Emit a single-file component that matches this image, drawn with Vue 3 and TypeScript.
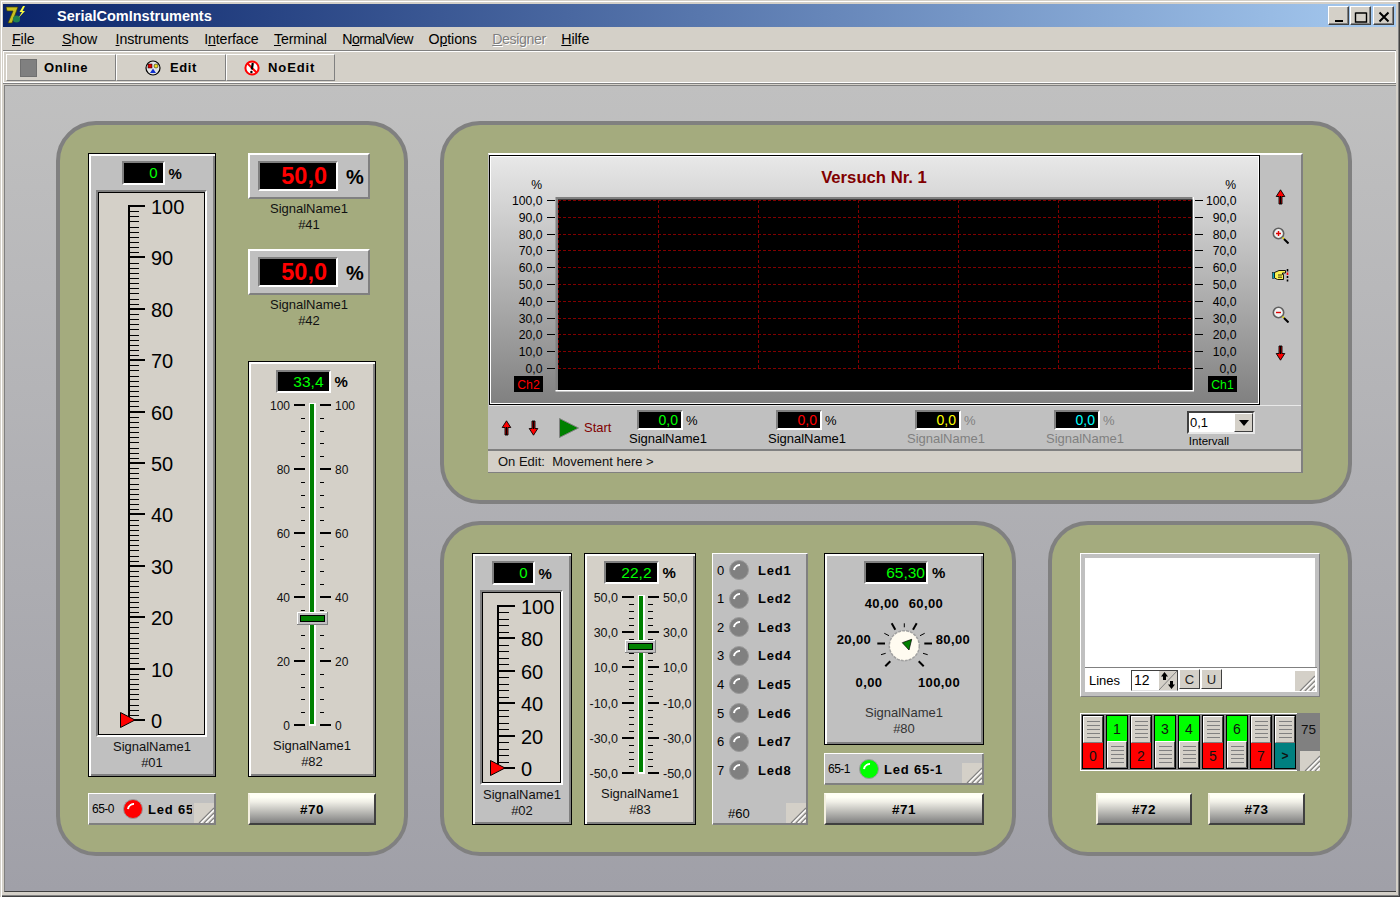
<script setup lang="ts">
interface Tick { y: number; major: boolean }

function makeTicks(top: number, bottom: number, majors: number, sub: number): Tick[] {
  const out: Tick[] = []
  const n = majors * sub
  for (let i = 0; i <= n; i++) {
    out.push({ y: Math.round(top + ((bottom - top) * i) / n), major: i % sub === 0 })
  }
  return out
}

function labelsOf(ticks: Tick[], names: string[]) {
  return ticks.filter(t => t.major).map((t, i) => ({ y: t.y, text: names[i] }))
}

const menu = [
  { pre: '', key: 'F', post: 'ile', cls: 'first' },
  { pre: '', key: 'S', post: 'how', cls: 'wide' },
  { pre: '', key: 'I', post: 'nstruments' },
  { pre: 'I', key: 'n', post: 'terface' },
  { pre: '', key: 'T', post: 'erminal' },
  { pre: 'N', key: 'o', post: 'rmalView', cls: 'tight' },
  { pre: 'O', key: 'p', post: 'tions' },
  { pre: '', key: 'D', post: 'esigner', cls: 'off' },
  { pre: '', key: 'H', post: 'ilfe' },
]

const scale01 = makeTicks(206, 720, 10, 10)
const scale01Labels = labelsOf(scale01, ['100', '90', '80', '70', '60', '50', '40', '30', '20', '10', '0'])
const scale02 = makeTicks(606, 768, 5, 5)
const scale02Labels = labelsOf(scale02, ['100', '80', '60', '40', '20', '0'])

const slider82 = makeTicks(405, 725, 5, 5)
const slider82Labels = labelsOf(slider82, ['100', '80', '60', '40', '20', '0'])
const slider83 = makeTicks(597, 773, 5, 5)
const slider83Labels = labelsOf(slider83, ['50,0', '30,0', '10,0', '-10,0', '-30,0', '-50,0'])

const axisY = [200, 217, 234, 250, 267, 284, 301, 318, 334, 351, 368]
const axisNames = ['100,0', '90,0', '80,0', '70,0', '60,0', '50,0', '40,0', '30,0', '20,0', '10,0', '0,0']
const gridX = [559, 659, 759, 859, 959, 1059, 1159]

const readouts = [
  { color: '#00ff00', off: false },
  { color: '#ff0000', off: false },
  { color: '#ffff00', off: true },
  { color: '#00ffff', off: true },
]

const ledRows = ['Led1', 'Led2', 'Led3', 'Led4', 'Led5', 'Led6', 'Led7', 'Led8']

const dialMajor = [
  [877.3, 644.5, 885, 644.5], [924.3, 644.5, 932, 644.5],
  [891.7, 624.3, 895.3, 630.7], [916.7, 624.3, 913, 630.7],
  [885.3, 667.3, 890.3, 662.3], [923.7, 667.3, 918.7, 662.3],
]
const dialMinor = [
  [904.3, 624.3, 904.3, 628.3], [884.3, 634.3, 889, 636.7], [924.7, 634.3, 920, 636.7],
  [881, 655.7, 885.7, 654.3], [927.7, 655.7, 923, 654.3],
]
const dialLabels = [
  { x: 882, y: 609, t: '40,00' }, { x: 926, y: 609, t: '60,00' },
  { x: 854, y: 645, t: '20,00' }, { x: 953, y: 645, t: '80,00' },
  { x: 869, y: 688, t: '0,00' }, { x: 939, y: 688, t: '100,00' },
]

// true = upper half lit (green), false = lower half lit (red)
const switches = [false, true, false, true, true, false, true, false]
</script>

<template>
  <div class="win">
    <!-- shared icons -->
    <svg class="defs" width="0" height="0" aria-hidden="true">
      <symbol id="grip" viewBox="0 0 20 20">
        <rect width="20" height="20" fill="#d4d0c8" />
        <path stroke="#808080" stroke-width="1.2" d="M5 20 20 5M10 20 20 10M15 20 20 15" />
        <path stroke="#fff" stroke-width="1.2" d="M7 20 20 7M12 20 20 12M17 20 20 17" />
      </symbol>
      <symbol id="arrow-up" viewBox="0 0 11 16">
        <path d="M5.5 .8 9.8 7.5H7V15H4V7.5H1.2Z" fill="#f00" stroke="#000" stroke-width=".9" />
        <path d="M5.5 7V15" stroke="#000" stroke-width="1.4" />
      </symbol>
      <symbol id="arrow-down" viewBox="0 0 11 16">
        <path d="M5.5 15.2 9.8 8.5H7V1H4V8.5H1.2Z" fill="#f00" stroke="#000" stroke-width=".9" />
        <path d="M5.5 9V1" stroke="#000" stroke-width="1.4" />
      </symbol>
    </svg>

    <header class="titlebar">
      <svg class="logo" viewBox="0 0 22 21">
        <path d="M1 2H13L7 18H3L8 6H2Z" fill="#c8c020" stroke="#404000" stroke-width=".7" />
        <circle cx="11.5" cy="14" r="3.6" fill="#208050" />
        <path d="M18 1 14.5 7H17L13.5 13 20 6H17.5L20 1Z" fill="#ffff40" />
      </svg>
      <span class="title">SerialComInstruments</span>
      <div class="caption-btns">
        <button class="cap"><svg viewBox="0 0 14 12"><path d="M3 10H11" stroke="#000" stroke-width="2" /></svg></button>
        <button class="cap"><svg viewBox="0 0 14 12"><path d="M1.5 2H12.5M1.5 1.5V11H12.5V1.5" fill="none" stroke="#000" stroke-width="1.4" /></svg></button>
        <button class="cap cap--close"><svg viewBox="0 0 14 12"><path d="M2.5 1.5 11.5 10.5M11.5 1.5 2.5 10.5" stroke="#000" stroke-width="2" /></svg></button>
      </div>
    </header>

    <nav class="menu">
      <span v-for="m in menu" :key="m.key + m.post" class="menu-item" :class="m.cls">{{ m.pre }}<u>{{ m.key }}</u>{{ m.post }}</span>
    </nav>

    <div class="toolbar">
      <button class="tool tool--online"><span class="tool-square" />Online</button>
      <button class="tool tool--edit">
        <svg viewBox="0 0 16 16" class="tool-icon">
          <circle cx="8" cy="8" r="7" fill="#e4e4e4" stroke="#000" stroke-width="1.2" />
          <rect x="3" y="4" width="4" height="4" fill="#e00000" stroke="#000" stroke-width=".5" />
          <circle cx="11" cy="6" r="2" fill="#f0e020" stroke="#000" stroke-width=".5" />
          <path d="M8 8.5 11 13H5Z" fill="#1030d0" />
        </svg>
        Edit
      </button>
      <button class="tool tool--noedit">
        <svg viewBox="0 0 16 16" class="tool-icon">
          <circle cx="8" cy="8" r="6.6" fill="#fff" stroke="#f00" stroke-width="2" />
          <path d="M3.5 3.5 12.5 12.5" stroke="#f00" stroke-width="2" />
          <path d="M8.8 3 7.8 9.5" stroke="#000" stroke-width="2.2" />
          <circle cx="7.4" cy="12" r="1.2" fill="#000" />
        </svg>
        NoEdit
      </button>
    </div>

    <main class="desk">
      <!-- left panel -->
      <section class="panel panel--a">
        <div class="col">
          <div class="instr instr--01">
            <div class="head"><span class="disp disp--01">0</span><span class="unit">%</span></div>
            <div class="scale scale--01">
              <svg viewBox="98 192 107 543" shape-rendering="crispEdges">
                <rect x="128" y="205" width="2" height="516" />
                <template v-for="t in scale01" :key="t.y">
                  <rect v-if="t.major" x="128" :y="t.y - 1" width="17" height="2" />
                  <rect v-else x="128" :y="t.y" width="11" height="1" />
                </template>
                <text v-for="l in scale01Labels" :key="l.text" class="scale-num" x="151" :y="l.y + 7.5">{{ l.text }}</text>
                <polygon points="120.5,712.5 135,720 120.5,727.5" fill="#f00" stroke="#000" shape-rendering="auto" />
              </svg>
            </div>
            <div class="name">SignalName1<br />#01</div>
          </div>
          <div class="led-box">
            <span class="led-id">65-0</span>
            <span class="led led--red" />
            <span class="led-text led-text--cut">Led 65-0</span>
            <svg class="grip"><use href="#grip" /></svg>
          </div>
        </div>
        <div class="col">
          <div class="big-group">
            <div class="big">
              <span class="disp disp--big">50,0</span><span class="big-unit">%</span>
            </div>
            <div class="name">SignalName1<br />#41</div>
          </div>
          <div class="big-group">
            <div class="big">
              <span class="disp disp--big">50,0</span><span class="big-unit">%</span>
            </div>
            <div class="name">SignalName1<br />#42</div>
          </div>
          <div class="instr instr--82">
            <div class="head"><span class="disp disp--slider">33,4</span><span class="unit">%</span></div>
            <svg class="slider-svg slider-svg--82" viewBox="249 396 126 340" shape-rendering="crispEdges">
              <template v-for="t in slider82" :key="t.y">
                <template v-if="t.major">
                  <rect x="294" :y="t.y - 1" width="11" height="2" />
                  <rect x="320" :y="t.y - 1" width="11" height="2" />
                </template>
                <template v-else>
                  <rect x="301" :y="t.y" width="4" height="1" />
                  <rect x="320" :y="t.y" width="4" height="1" />
                </template>
              </template>
              <rect x="309" y="403" width="7" height="323" fill="#fff" />
              <rect x="310" y="404" width="4" height="320" fill="#008000" />
              <text v-for="l in slider82Labels" :key="l.text" class="tick-num" x="290" :y="l.y + 4.5" text-anchor="end">{{ l.text }}</text>
              <text v-for="l in slider82Labels" :key="l.text + 'r'" class="tick-num" x="335" :y="l.y + 4.5">{{ l.text }}</text>
              <rect x="297" y="612" width="31" height="13" fill="#808080" />
              <rect x="297" y="612" width="30" height="12" fill="#fff" />
              <rect x="298" y="613" width="29" height="11" fill="#c0c0c0" />
              <rect x="300" y="615" width="25" height="7" fill="#000" />
              <rect x="301" y="616" width="23" height="5" fill="#008000" />
            </svg>
            <div class="name">SignalName1<br />#82</div>
          </div>
          <button class="bevel bevel--70">#70</button>
        </div>
      </section>

      <!-- chart panel -->
      <section class="panel panel--b">
        <div class="chart">
          <div class="chart-top">
            <div class="chart-main">
              <svg viewBox="491 156 769 248">
                <text class="chart-title" x="875" y="183" text-anchor="middle">Versuch Nr. 1</text>
                <text class="axis" x="543" y="189" text-anchor="end">%</text>
                <text class="axis" x="1237" y="189" text-anchor="end">%</text>
                <rect x="556.5" y="197" width="638.5" height="194.5" fill="#808080" />
                <path d="M1195 197V391.5H556.5V390H1193.5V197Z" fill="#fff" />
                <rect x="559" y="199.5" width="634.5" height="190.5" fill="#000" />
                <g stroke="#800000" stroke-dasharray="3 2" shape-rendering="crispEdges">
                  <line v-for="y in axisY" :key="y" x1="559" :y1="y + .5" x2="1193" :y2="y + .5" />
                  <line v-for="x in gridX" :key="x" :x1="x + .5" y1="200" :x2="x + .5" y2="368" />
                </g>
                <g v-for="(y, i) in axisY" :key="'a' + y">
                  <rect x="548" :y="y" width="8" height="1" fill="#000" shape-rendering="crispEdges" />
                  <rect x="1196" :y="y" width="8" height="1" fill="#000" shape-rendering="crispEdges" />
                  <text class="axis" x="543.5" :y="y + 5" text-anchor="end">{{ axisNames[i] }}</text>
                  <text class="axis" x="1237.5" :y="y + 5" text-anchor="end">{{ axisNames[i] }}</text>
                </g>
                <rect x="515" y="376" width="29" height="16" fill="#000" />
                <text class="axis axis--ch2" x="529.5" y="389" text-anchor="middle">Ch2</text>
                <rect x="1209" y="376" width="29" height="16" fill="#000" />
                <text class="axis axis--ch1" x="1223.5" y="389" text-anchor="middle">Ch1</text>
              </svg>
            </div>
            <div class="chart-side">
              <svg class="arrow"><use href="#arrow-up" /></svg>
              <svg class="side-icon" viewBox="0 0 17 17">
                <circle cx="6.5" cy="6.5" r="5.2" fill="#f0f0f0" stroke="#606060" stroke-width="1.6" />
                <path d="M4 6.5H9M6.5 4V9" stroke="#e00000" stroke-width="1.4" />
                <path d="M10.5 10.5 12 12" stroke="#e0d000" stroke-width="1.6" />
                <path d="M12 12 16.5 16.5" stroke="#000" stroke-width="2" />
              </svg>
              <svg class="side-icon" viewBox="0 0 17 15">
                <path d="M2.5 4.5 7 2.5H13.5V5H10.5V6.5H11.5V11.5H5.5L2.5 10Z" fill="#f8f050" stroke="#000" stroke-width=".9" />
                <path d="M6 7H10M6 9.2H10" stroke="#000" stroke-width=".8" />
                <rect x=".5" y="4.5" width="2" height="6" fill="#00a0c0" stroke="#000" stroke-width=".5" />
                <path d="M15.5 1V3.5" stroke="#000" stroke-width="1.6" />
                <path d="M15.5 4.5V7" stroke="#f00" stroke-width="1.6" />
                <path d="M15.5 8V14" stroke="#000" stroke-width="1.6" stroke-dasharray="2 1.5" />
              </svg>
              <svg class="side-icon" viewBox="0 0 17 17">
                <circle cx="6.5" cy="6.5" r="5.2" fill="#f0f0f0" stroke="#606060" stroke-width="1.6" />
                <path d="M4 6.5H9" stroke="#e00000" stroke-width="1.4" />
                <path d="M10.5 10.5 12 12" stroke="#e0d000" stroke-width="1.6" />
                <path d="M12 12 16.5 16.5" stroke="#000" stroke-width="2" />
              </svg>
              <svg class="arrow"><use href="#arrow-down" /></svg>
            </div>
          </div>
          <div class="chart-row">
            <svg class="arrow arrow--first"><use href="#arrow-up" /></svg>
            <svg class="arrow arrow--second"><use href="#arrow-down" /></svg>
            <svg class="play" viewBox="0 0 20 20"><path d="M.5 .5 19.5 10 .5 19.5Z" fill="#008000" stroke="#808080" /></svg>
            <span class="start">Start</span>
            <div v-for="(r, i) in readouts" :key="i" class="readout" :class="{ 'readout--off': r.off }">
              <div class="readout-top">
                <span class="disp disp--small" :style="{ color: r.color }">0,0</span>
                <span class="readout-unit">%</span>
              </div>
              <span class="readout-name">SignalName1</span>
            </div>
            <div class="combo-wrap">
              <div class="combo">
                <span class="combo-val">0,1</span>
                <span class="combo-btn"><svg viewBox="0 0 10 6"><path d="M0 0H10L5 6Z" fill="#000" /></svg></span>
              </div>
              <span class="combo-label">Intervall</span>
            </div>
          </div>
          <div class="chart-strip">On Edit:&nbsp; Movement here &gt;</div>
        </div>
      </section>

      <!-- lower middle panel -->
      <section class="panel panel--c">
        <div class="instr instr--02">
          <div class="head"><span class="disp disp--01">0</span><span class="unit">%</span></div>
          <div class="scale scale--02">
            <svg viewBox="482 592 79 191" shape-rendering="crispEdges">
              <rect x="497" y="605" width="2" height="164" />
              <template v-for="t in scale02" :key="t.y">
                <rect v-if="t.major" x="497" :y="t.y - 1" width="18" height="2" />
                <rect v-else x="497" :y="t.y" width="12" height="1" />
              </template>
              <text v-for="l in scale02Labels" :key="l.text" class="scale-num" x="521" :y="l.y + 7.5">{{ l.text }}</text>
              <polygon points="490.5,760.5 505,768 490.5,775.5" fill="#f00" stroke="#000" shape-rendering="auto" />
            </svg>
          </div>
          <div class="name">SignalName1<br />#02</div>
        </div>

        <div class="instr instr--83">
          <div class="head"><span class="disp disp--slider">22,2</span><span class="unit">%</span></div>
          <svg class="slider-svg slider-svg--83" viewBox="585 586 110 195" shape-rendering="crispEdges">
            <template v-for="t in slider83" :key="t.y">
              <template v-if="t.major">
                <rect x="622" :y="t.y - 1" width="12" height="2" />
                <rect x="648" :y="t.y - 1" width="11" height="2" />
              </template>
              <template v-else>
                <rect x="629" :y="t.y" width="5" height="1" />
                <rect x="648" :y="t.y" width="5" height="1" />
              </template>
            </template>
            <rect x="638" y="595" width="7" height="179" fill="#fff" />
            <rect x="639" y="596" width="4" height="176" fill="#008000" />
            <text v-for="l in slider83Labels" :key="l.text" class="tick-num tick-num--83" x="618" :y="l.y + 4.5" text-anchor="end">{{ l.text }}</text>
            <text v-for="l in slider83Labels" :key="l.text + 'r'" class="tick-num tick-num--83" x="663" :y="l.y + 4.5">{{ l.text }}</text>
            <rect x="625" y="640" width="31" height="13" fill="#808080" />
            <rect x="625" y="640" width="30" height="12" fill="#fff" />
            <rect x="626" y="641" width="29" height="11" fill="#c0c0c0" />
            <rect x="628" y="643" width="25" height="7" fill="#000" />
            <rect x="629" y="644" width="23" height="5" fill="#008000" />
          </svg>
          <div class="name">SignalName1<br />#83</div>
        </div>

        <div class="leds">
          <div v-for="(l, i) in ledRows" :key="l" class="led-row">
            <span class="led-idx">{{ i }}</span>
            <span class="led led--gray" />
            <span class="led-text">{{ l }}</span>
          </div>
          <span class="leds-id">#60</span>
          <svg class="grip"><use href="#grip" /></svg>
        </div>

        <div class="col col--c">
          <div class="gauge">
            <div class="head"><span class="disp disp--gauge">65,30</span><span class="unit">%</span></div>
            <svg class="dial" viewBox="826 590 156 116">
              <text v-for="d in dialLabels" :key="d.t" class="dial-num" :x="d.x" :y="d.y" text-anchor="middle">{{ d.t }}</text>
              <line v-for="m in dialMajor" :key="m[0]" :x1="m[0]" :y1="m[1]" :x2="m[2]" :y2="m[3]" stroke="#000" stroke-width="2" />
              <line v-for="m in dialMinor" :key="m[0]" :x1="m[0]" :y1="m[1]" :x2="m[2]" :y2="m[3]" stroke="#000" stroke-width="1" />
              <circle cx="904.3" cy="646.7" r="15" fill="#fffbf0" stroke="#a0a0a0" stroke-width="1.5" stroke-dasharray="3 1" />
              <path d="M902.3 643.7 911.7 640.3 909 651Z" fill="#008000" stroke="#000" stroke-width=".7" />
            </svg>
            <div class="name name--gauge">SignalName1<br />#80</div>
          </div>
          <div class="led-box led-box--green">
            <span class="led-id">65-1</span>
            <span class="led led--green" />
            <span class="led-text">Led 65-1</span>
            <svg class="grip"><use href="#grip" /></svg>
          </div>
          <button class="bevel">#71</button>
        </div>
      </section>

      <!-- lower right panel -->
      <section class="panel panel--d">
        <div class="term">
          <div class="term-screen" />
          <div class="term-bar">
            <span class="term-lines">Lines</span>
            <div class="spin">
              <span class="spin-val">12</span>
              <svg class="spin-btn" viewBox="0 0 18 19">
                <rect width="18" height="19" fill="#d4d0c8" />
                <path d="M0 19 18 0" stroke="#808080" />
                <path d="M5.5 1 9 5.5H7V9H4V5.5H2Z" fill="#000" />
                <path d="M12.5 18 16 13.5H14V10H11V13.5H9Z" fill="#000" />
              </svg>
            </div>
            <button class="mini">C</button>
            <button class="mini">U</button>
            <svg class="grip"><use href="#grip" /></svg>
          </div>
        </div>

        <div class="switches">
          <div v-for="(up, i) in switches" :key="i" class="sw">
            <span v-if="up" class="sw-cell sw-cell--on">{{ i }}</span>
            <span v-else class="sw-knob" />
            <span v-if="up" class="sw-knob" />
            <span v-else class="sw-cell sw-cell--off">{{ i }}</span>
          </div>
          <div class="sw">
            <span class="sw-knob" />
            <span class="sw-cell sw-cell--more">&gt;</span>
          </div>
          <div class="sw-side">
            <span class="sw-val">75</span>
            <svg class="grip"><use href="#grip" /></svg>
          </div>
        </div>

        <div class="btn-row">
          <button class="bevel bevel--72">#72</button>
          <button class="bevel bevel--73">#73</button>
        </div>
      </section>
    </main>
  </div>
</template>

<style>
html, body {
  margin: 0;
  background: #d4d0c8;
}
</style>

<style scoped>
* { box-sizing: border-box; }
.defs { position: absolute; }

.win {
  width: 1400px;
  height: 897px;
  padding: 4px 4px 5px 3px;
  display: flex;
  flex-direction: column;
  background: #d4d0c8;
  font-family: "Liberation Sans", Arial, sans-serif;
  color: #000;
  box-shadow: inset 1px 1px 0 #d4d0c8, inset 2px 2px 0 #fff, inset -1px -1px 0 #404040, inset -2px -2px 0 #808080;
  overflow: hidden;
}

.titlebar {
  height: 23px;
  flex: none;
  display: flex;
  align-items: center;
  padding-left: 2px;
  background: linear-gradient(90deg, #0a246a, #a6caf0);
}
.logo { width: 22px; height: 21px; flex: none; }
.title {
  margin-left: 30px;
  color: #fff;
  font-size: 14.5px;
  font-weight: 700;
}
.caption-btns {
  margin-left: auto;
  margin-right: 2px;
  display: flex;
  gap: 1px;
}
.cap {
  width: 21px;
  height: 19px;
  padding: 0;
  display: block;
  background: #d4d0c8;
  border: 1px solid;
  border-color: #fff #404040 #404040 #fff;
  box-shadow: inset -1px -1px 0 #808080;
}
.cap--close { margin-left: 1px; }
.cap svg { width: 14px; height: 12px; display: block; margin: 2px auto 0; }

.menu {
  height: 24px;
  flex: none;
  display: flex;
  align-items: center;
  gap: 15.5px;
  padding-left: 9px;
  padding-bottom: 1px;
  font-size: 14.2px;
  letter-spacing: -.1px;
}
.menu-item.first { margin-right: 12px; }
.menu-item.wide { margin-right: 3px; }
.menu-item.tight { letter-spacing: -.55px; }
.menu-item.off { color: #808080; text-shadow: 1px 1px 0 #fff; letter-spacing: -.4px; }

.toolbar {
  height: 32px;
  flex: none;
  margin: 0 0 1px 0;
  padding: 2px 0 0 2px;
  display: flex;
  border: 1px solid #fff;
  border-left-color: #fff;
  box-shadow: inset 0 1px 0 #d4d0c8, 0 -1px 0 #808080, 0 1px 0 #808080;
}
.tool {
  height: 27px;
  display: flex;
  align-items: center;
  padding: 0;
  background: #d4d0c8;
  border: 1px solid;
  border-color: #fff #808080 #808080 #fff;
  font: 700 13px "Liberation Sans", Arial, sans-serif;
  letter-spacing: .6px;
  color: #000;
}
.tool--online { width: 110px; padding-left: 13px; gap: 7px; }
.tool--edit { width: 110px; padding-left: 28px; gap: 9px; }
.tool--noedit { width: 109px; padding-left: 17px; gap: 8px; letter-spacing: .9px; }
.tool-square { width: 17px; height: 18px; background: #808080; border: 1px solid #707070; }
.tool-icon { width: 16px; height: 16px; }

.desk {
  flex: 1;
  min-height: 0;
  padding: 35px 0 0 51px;
  display: grid;
  grid-template-columns: 352px 576px 304px;
  grid-template-rows: 383px 335px;
  column-gap: 32px;
  row-gap: 17px;
  align-content: start;
  justify-content: start;
  margin: 1px 0 0 1px;
  background: linear-gradient(180deg, #c0c0c0, #a0a0a8);
  border-top: 1px solid #808080;
  border-left: 1px solid #808080;
  border-bottom: 1px solid #404040;
}

.panel {
  border: 4px solid #808080;
  border-radius: 40px;
  background: #a4ab7e;
  padding: 28px 28px 27px;
}
.panel--a { grid-row: 1 / span 2; display: flex; gap: 32px; }
.panel--b { grid-column: 2 / span 2; padding: 28px 45px 27px 44px; }
.panel--c { display: flex; }
.panel--d { display: flex; flex-direction: column; }

.col { width: 128px; display: flex; flex-direction: column; }
.col--c { width: 160px; margin-left: 16px; }

.instr {
  border: 1px solid #000;
  box-shadow: inset 2px 2px 0 #fff, inset -2px -2px 0 #808080;
  display: flex;
  flex-direction: column;
  align-items: center;
  background: #c0c0c0;
}
.instr--01 { height: 624px; padding-top: 7px; margin-bottom: 16px; flex: none; }
.instr--82 { height: 416px; padding-top: 8px; margin-bottom: 16px; margin-top: 16px; flex: none; background: #d4d0c8; }
.instr--02 { width: 100px; height: 272px; padding-top: 7px; }
.instr--83 { width: 112px; height: 272px; padding-top: 7px; margin-left: 12px; background: #d4d0c8; }

.head { display: flex; align-items: center; gap: 4px; flex: none; }
.unit { font-size: 15px; font-weight: 700; width: 14px; line-height: 1; }

.disp {
  background: #000;
  color: #0f0;
  text-align: right;
  border: 2px solid;
  border-color: #808080 #fff #fff #808080;
  display: block;
  overflow: hidden;
}
.disp--01 { width: 43px; height: 24px; font-size: 15px; line-height: 20px; padding-right: 5px; }
.disp--slider { width: 55px; height: 23px; font-size: 15.5px; line-height: 19px; padding-right: 5px; }
.disp--gauge { width: 64px; height: 23px; font-size: 15.5px; line-height: 19px; padding-right: 1px; }
.disp--small { width: 46px; height: 20px; font-size: 14px; line-height: 16px; padding-right: 3px; }
.disp--big {
  width: 80px;
  height: 30px;
  color: #f00;
  font-size: 23.5px;
  font-weight: 700;
  line-height: 27px;
  padding-right: 9px;
}

.scale {
  align-self: flex-start;
  margin: 5px 0 0 7px;
  border: 2px solid;
  border-color: #808080 #fff #fff #808080;
  background: #d4d0c8;
  box-shadow: inset 0 0 0 1px #000;
}
.scale svg { display: block; width: 100%; height: 100%; }
.scale--01 { width: 111px; height: 547px; }
.scale--02 { width: 83px; height: 195px; }
.scale-num { font-size: 20px; }

.name {
  font-size: 13px;
  line-height: 16px;
  text-align: center;
  padding-top: 2px;
  color: #111;
}

.big-group { height: 96px; flex: none; width: 122px; }
.big {
  height: 46px;
  padding: 6px 0 0 8px;
  display: flex;
  gap: 8px;
  background: #c0c0c0;
  border: 2px solid;
  border-color: #fff #808080 #808080 #fff;
}
.big-unit { font-size: 20px; font-weight: 700; line-height: 32px; }
.big-group + .big-group { margin-top: 0; }

.slider-svg { display: block; flex: none; margin-top: 3px; }
.slider-svg--82 { width: 126px; height: 340px; }
.slider-svg--83 { width: 110px; height: 195px; margin-top: 2px; }
.instr--83 .name { padding-top: 5px; }
.tick-num { font-size: 12px; fill: #111; }
.tick-num--83 { font-size: 12.5px; }

.led-box {
  position: relative;
  height: 32px;
  flex: none;
  display: flex;
  align-items: center;
  padding-left: 2px;
  background: #c0c0c0;
  border: 1px solid;
  border-color: #fff #808080 #808080 #fff;
  box-shadow: inset -1px -1px 0 #808080;
  overflow: hidden;
}
.led-id { font-size: 12px; letter-spacing: -.5px; width: 32px; padding-left: 1px; }
.led-text {
  font-size: 13px;
  font-weight: 700;
  letter-spacing: .8px;
  white-space: nowrap;
  margin-left: 5px;
}
.led-text--cut { width: 44px; overflow: hidden; flex: none; }

.led {
  position: relative;
  width: 20px;
  height: 20px;
  flex: none;
  border-radius: 50%;
  border: 1px solid #9a9a9a;
}
.led::after {
  content: '';
  position: absolute;
  left: 3px;
  top: 3px;
  width: 9px;
  height: 9px;
  border-radius: 50%;
  border: 2px solid transparent;
  border-top-color: #fff;
  transform: rotate(-40deg);
}
.led--red { background: #f00; }
.led--green { background: #0f0; }
.led--gray { background: #808080; }

.grip {
  position: absolute;
  right: 1px;
  bottom: 1px;
  width: 20px;
  height: 20px;
}

.bevel {
  display: block;
  width: 100%;
  height: 32px;
  flex: none;
  padding: 0;
  border: 2px solid;
  border-color: #fffff4 #404040 #404040 #f4f0e0;
  background: linear-gradient(180deg, #fffff4 8%, #efeee6 25%, #808080 100%);
  font: 700 13.5px "Liberation Sans", Arial, sans-serif;
  letter-spacing: .5px;
  color: #000;
}

/* chart */
.chart {
  height: 320px;
  display: flex;
  flex-direction: column;
  background: #c0c0c0;
  border-top: 2px solid #fff;
  border-left: 1px solid #c0c0c0;
  border-right: 2px solid #808080;
}
.chart-top { display: flex; height: 250px; flex: none; }
.chart-main {
  width: 771px;
  flex: none;
  border: 1px solid #000;
  box-shadow: inset 0 0 0 1px #fff;
  background: linear-gradient(180deg, #e8e8e8, #808080);
}
.chart-main svg { display: block; width: 769px; height: 248px; }
.chart-title { font-size: 16.7px; font-weight: 700; fill: #800000; }
.axis { font-size: 12.2px; fill: #000; }
.axis--ch2 { fill: #f00; }
.axis--ch1 { fill: #0f0; }
.chart-side {
  flex: 1;
  display: flex;
  flex-direction: column;
  align-items: center;
  justify-content: space-between;
  padding: 34px 0 44px;
}
.arrow { width: 11px; height: 16px; display: block; flex: none; }
.side-icon { width: 17px; height: 17px; display: block; }

.chart-row {
  height: 44px;
  flex: none;
  padding-left: 12px;
  display: flex;
  align-items: center;
  border-top: 1px solid #e8e8e8;
}
.arrow--second { margin-left: 16px; }
.play { width: 20px; height: 20px; margin-left: 20px; flex: none; }
.start { margin-left: 5px; color: #800000; font-size: 13px; width: 27px; flex: none; }
.readout {
  width: 78px;
  flex: none;
  margin-left: 61px;
  display: flex;
  flex-direction: column;
  align-items: center;
  align-self: flex-start;
  padding-top: 4px;
  font-size: 13px;
  white-space: nowrap;
}
.start + .readout { margin-left: 18px; }
.readout-top { display: flex; align-items: center; gap: 3px; }
.readout-unit { font-size: 13px; width: 13px; }
.readout-name { line-height: 15px; margin-top: 1px; }
.readout--off { color: #808080; }

.combo-wrap {
  margin-left: 63px;
  align-self: flex-start;
  padding-top: 5px;
  width: 68px;
  flex: none;
}
.combo {
  height: 23px;
  display: flex;
  align-items: stretch;
  background: #fff;
  border: 2px solid;
  border-color: #404040 #e8e8e8 #e8e8e8 #404040;
}
.combo-val { flex: 1; font-size: 13px; line-height: 19px; padding-left: 1px; }
.combo-btn {
  width: 19px;
  display: flex;
  align-items: center;
  justify-content: center;
  background: #d4d0c8;
  border: 1px solid;
  border-color: #fff #404040 #404040 #fff;
}
.combo-btn svg { width: 10px; height: 6px; }
.combo-label { display: block; width: 44px; text-align: center; font-size: 11.5px; line-height: 14px; }

.chart-strip {
  flex: 1;
  margin-left: -1px;
  border-top: 2px solid #808080;
  border-bottom: 1px solid #808080;
  background: #d4d0c8;
  padding-left: 10px;
  font-size: 13px;
  line-height: 21px;
  color: #111;
}

/* leds */
.leds {
  position: relative;
  width: 96px;
  height: 272px;
  margin-left: 16px;
  padding-top: 2px;
  background: #c0c0c0;
  border: 1px solid;
  border-color: #fff #808080 #808080 #fff;
  box-shadow: inset -1px -1px 0 #808080;
}
.led-row {
  height: 28.55px;
  display: flex;
  align-items: center;
  padding-left: 4px;
}
.led-idx { width: 12px; font-size: 13px; }
.led-row .led-text { margin-left: 9px; }
.leds-id { position: absolute; left: 15px; bottom: 3px; font-size: 13px; }

/* gauge */
.gauge {
  height: 192px;
  flex: none;
  border: 1px solid #000;
  box-shadow: inset 2px 2px 0 #fff, inset -2px -2px 0 #808080;
  background: #c0c0c0;
  padding-top: 7px;
  display: flex;
  flex-direction: column;
  align-items: center;
}
.gauge .head { margin-left: 2px; }
.dial { width: 156px; height: 116px; display: block; flex: none; margin-top: 5px; }
.dial-num { font-size: 13px; font-weight: 700; letter-spacing: .4px; }
.name--gauge { padding-top: 0; color: #333; }
.col--c .led-box { margin-top: 8px; }
.col--c .bevel { margin-top: 8px; }

/* terminal */
.term {
  height: 144px;
  flex: none;
  padding: 4px 4px 4px 4px;
  display: flex;
  flex-direction: column;
  background: #c0c0c0;
  border: 1px solid;
  border-color: #fff #808080 #808080 #fff;
}
.term-screen { flex: 1; background: #fff; }
.term-bar {
  position: relative;
  height: 25px;
  flex: none;
  margin-right: -2px;
  display: flex;
  align-items: flex-start;
  padding: 1px 0 0 4px;
  background: #fff;
  border-top: 1px solid #808080;
}
.term-lines { width: 42px; font-size: 13px; line-height: 24px; flex: none; }
.spin {
  width: 47px;
  height: 21px;
  margin-top: 1px;
  display: flex;
  background: #fff;
  border: 1px solid;
  border-color: #404040 #404040 #e0e0e0 #404040;
  flex: none;
}
.spin-val { flex: 1; font-size: 14px; line-height: 19px; padding-left: 2px; }
.spin-btn { width: 18px; height: 19px; display: block; }
.mini {
  width: 21px;
  height: 20px;
  padding: 0;
  margin-left: 1px;
  background: #d4d0c8;
  border: 1px solid;
  border-color: #fff #404040 #404040 #fff;
  font: 400 13px "Liberation Sans", Arial, sans-serif;
  color: #222;
  flex: none;
}
.term-bar .grip { right: 2px; bottom: 1px; }

.switches {
  height: 58px;
  margin-top: 16px;
  flex: none;
  display: flex;
  padding: 1px 0 1px 1px;
  background: #fff;
}
.sw {
  width: 24px;
  flex: none;
  display: flex;
  flex-direction: column;
  background: #000;
  border: 1px solid #808080;
  box-shadow: inset 0 0 0 1px #000;
  padding: 1px;
}
.sw-cell {
  flex: 1;
  display: flex;
  align-items: center;
  justify-content: center;
  font-size: 14px;
  color: #111;
}
.sw-cell--on { background: #0f0; }
.sw-cell--off { background: #f00; }
.sw-cell--more { background: #008080; font-size: 12px; font-weight: 700; }
.sw-knob {
  flex: 1;
  border: 1px solid;
  border-color: #fff #404040 #808080 #fff;
  background:
    repeating-linear-gradient(180deg, #808080 0 1px, transparent 1px 4px) center / 13px 17px no-repeat,
    #d4d0c8;
}
.sw-side {
  position: relative;
  flex: 1;
  background: #808080;
  margin: -1px 0 -1px 0;
  text-align: center;
  font-size: 13.5px;
  line-height: 34px;
  color: #111;
}
.sw-side .grip { right: 0; bottom: 0; }

.btn-row {
  margin-top: 22px;
  padding-left: 16px;
  display: flex;
  gap: 16px;
}
.bevel--72 { width: 96px; }
.bevel--73 { width: 97px; }
</style>
